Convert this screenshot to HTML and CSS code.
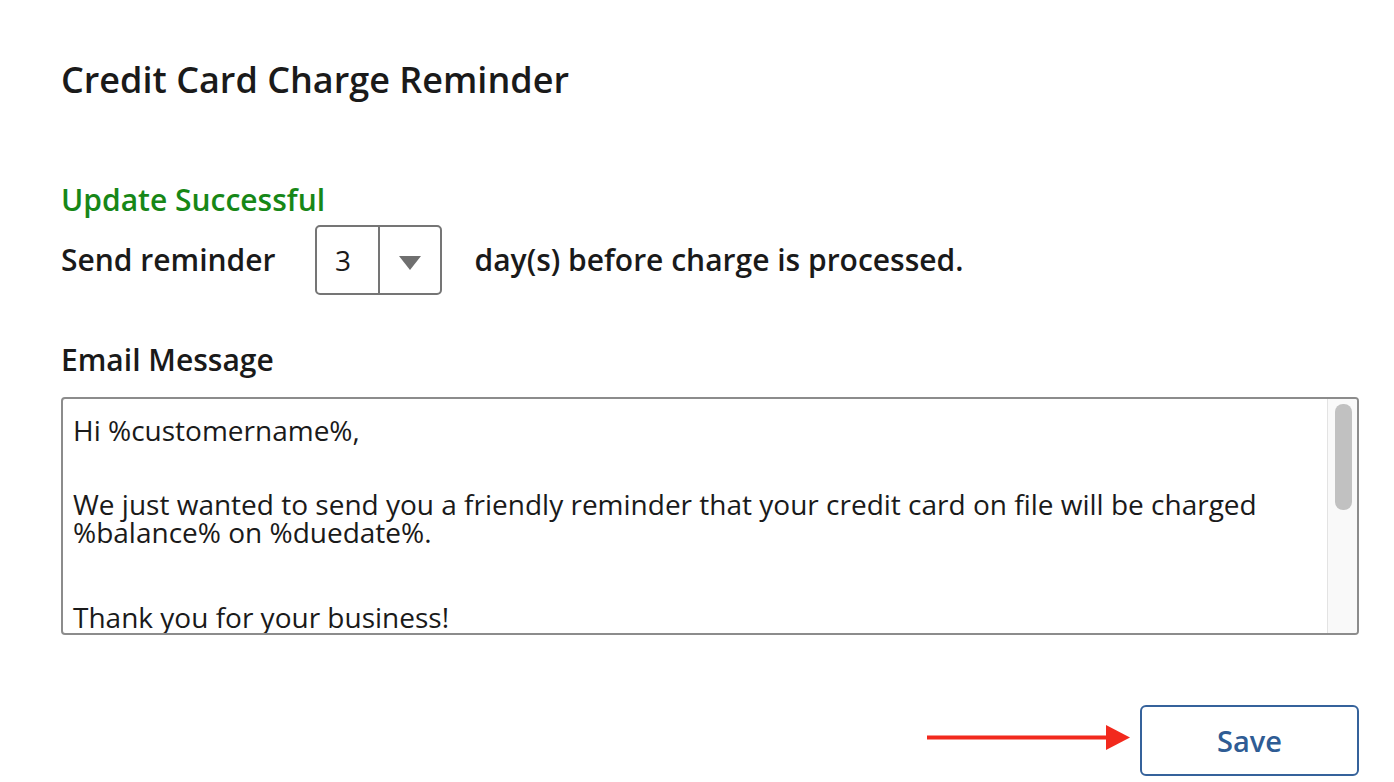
FILE: index.html
```html
<!DOCTYPE html>
<html lang="en">
<head>
<meta charset="utf-8">
<title>Credit Card Charge Reminder</title>
<link rel="stylesheet" href="styles.css">
</head>
<body>
<main class="page">
  <h1 class="title">Credit Card Charge Reminder</h1>
  <p class="status">Update Successful</p>
  <div class="reminder-row">
    <span class="label">Send reminder</span>
    <div class="select">
      <span class="select-value">3</span>
      <span class="select-toggle"><span class="caret"></span></span>
    </div>
    <span class="label">day(s) before charge is processed.</span>
  </div>
  <h2 class="field-label">Email Message</h2>
  <div class="textarea">
    <div class="textarea-content">
      <div class="line">Hi %customername%,</div>
      <div class="line para">We just wanted to send you a friendly reminder that your credit card on file will be charged</div>
      <div class="line">%balance% on %duedate%.</div>
      <div class="line para-last">Thank you for your business!</div>
    </div>
    <div class="scrollbar"><div class="thumb"></div></div>
  </div>
  <div class="actions">
    <svg class="arrow" width="203" height="25" viewBox="0 0 203 25" aria-hidden="true">
      <rect x="0" y="10.5" width="181" height="4" fill="#f2291d"/>
      <polygon points="179,0 203,12.5 179,25" fill="#f2291d"/>
    </svg>
    <button class="save" type="button">Save</button>
  </div>
</main>
</body>
</html>
```
FILE: styles.css
```css
* { box-sizing: border-box; }
html, body { margin: 0; background: #ffffff; }
body {
  font-family: "Open Sans", "Noto Sans", sans-serif;
  color: #1a1a1a;
}
.page {
  width: 1394px;
  padding: 56px 35px 0 61px;
  display: flex;
  flex-direction: column;
}
.title {
  margin: 0;
  font-size: 36px;
  font-weight: 600;
  line-height: 48px;
}
.status {
  margin: 78px 0 0 0;
  font-size: 30px;
  font-weight: 600;
  line-height: 36px;
  color: #178717;
}
.reminder-row {
  display: flex;
  align-items: center;
  margin-top: 7px;
}
.label {
  font-size: 30px;
  font-weight: 600;
  line-height: 36px;
}
.select {
  margin: 0 33px 0 39px;
  width: 127px;
  height: 70px;
  border: 2px solid #757575;
  border-radius: 5px;
  display: flex;
}
.select-value {
  width: 63px;
  border-right: 2px solid #757575;
  font-size: 28px;
  display: flex;
  align-items: center;
  justify-content: center;
  padding-right: 8px;
}
.select-toggle {
  flex: 1;
  display: flex;
  align-items: center;
  justify-content: center;
}
.caret {
  width: 0;
  height: 0;
  border-left: 11px solid transparent;
  border-right: 11px solid transparent;
  border-top: 14px solid #6f6f6f;
  margin-top: 6px;
}
.field-label {
  margin: 47px 0 0 0;
  font-size: 30px;
  font-weight: 600;
  line-height: 36px;
}
.textarea {
  margin-top: 19px;
  height: 238px;
  border: 2px solid #8c8c8c;
  border-radius: 4px;
  display: flex;
  overflow: hidden;
}
.textarea-content {
  flex: 1;
  padding: 17px 10px 0 10px;
  font-size: 28px;
  line-height: 28px;
  overflow: hidden;
}
.line { white-space: nowrap; }
.line.para { margin-top: 46px; }
.line.para-last { margin-top: 57px; }
.scrollbar {
  width: 30px;
  background: #f9f9f9;
  border-left: 1px solid #e3e3e3;
  padding: 5px 5px 0 7px;
}
.thumb {
  height: 106px;
  background: #c1c1c1;
  border-radius: 8px;
}
.actions {
  margin-top: 70px;
  display: flex;
  justify-content: flex-end;
  align-items: center;
  gap: 10px;
}
.arrow { display: block; margin-bottom: 6px; }
.save {
  width: 219px;
  height: 71px;
  border: 2px solid #35629b;
  border-radius: 6px;
  background: #ffffff;
  color: #2f5c94;
  font-family: "Open Sans", "Noto Sans", sans-serif;
  font-size: 29px;
  font-weight: 600;
  padding: 0;
}
```
